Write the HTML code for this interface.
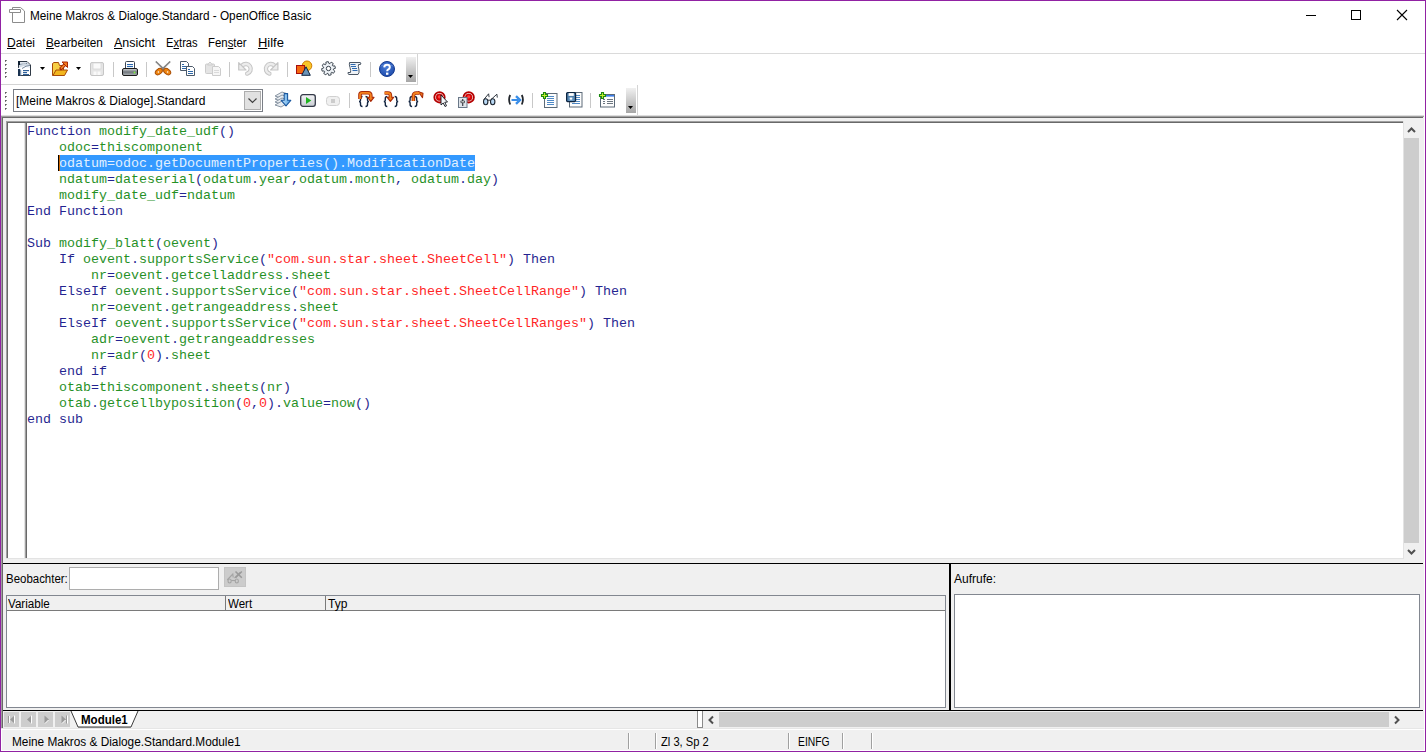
<!DOCTYPE html>
<html><head><meta charset="utf-8">
<style>
*{margin:0;padding:0;box-sizing:border-box}
html,body{width:1426px;height:752px;overflow:hidden;background:#fff}
body{position:relative;font-family:"Liberation Sans",sans-serif;font-size:12px;color:#000}
.a{position:absolute}
.t{position:absolute;white-space:pre;line-height:14px;transform-origin:0 0}
.u{text-decoration:underline}
.code{position:absolute;left:27px;top:124px;font-family:"Liberation Mono",monospace;font-size:13.333px;line-height:16px;white-space:pre;color:#008000;opacity:0.86}
.k{color:#000080}.s{color:#ff0000}.w{color:#fff}
svg{position:absolute;overflow:visible}
.dot{position:absolute;width:1px;height:1px;background:#5a5a5a;box-shadow:1px 0 #8a8a8a,0 1px #8a8a8a}
.dot::before{display:none}
.sep{position:absolute;width:1px;background:#c8c8c8}
</style></head><body>
<!-- ===== TITLE BAR ===== -->
<svg style="left:9px;top:6px" width="17" height="17" viewBox="0 0 17 17">
  <path d="M3.5 1.5 H11.5 L15.5 5 V16.5 H3.5 Z" fill="#fff" stroke="#8c8c8c" stroke-width="1"/>
  <path d="M0.5 3.5 H11.5 V6.5 H0.5 Z" fill="#fff" stroke="#8c8c8c" stroke-width="1"/>
</svg>
<div class="t" id="title" style="left:30px;top:9px;transform:scaleX(0.982)">Meine Makros &amp; Dialoge.Standard - OpenOffice Basic</div>
<div class="a" style="left:1306px;top:15px;width:10px;height:1px;background:#000"></div>
<div class="a" style="left:1351px;top:10px;width:10px;height:10px;border:1px solid #000"></div>
<svg style="left:1397px;top:10px" width="10" height="10" viewBox="0 0 10 10"><path d="M0 0 L10 10 M10 0 L0 10" stroke="#000" stroke-width="1.1"/></svg>

<!-- ===== MENU ===== -->
<div class="t" style="left:7px;top:36px"><span class="u">D</span>atei</div>
<div class="t" style="left:46px;top:36px;transform:scaleX(0.98)"><span class="u">B</span>earbeiten</div>
<div class="t" style="left:114px;top:36px;transform:scaleX(1.04)"><span class="u">A</span>nsicht</div>
<div class="t" style="left:166px;top:36px;transform:scaleX(0.93)">E<span class="u">x</span>tras</div>
<div class="t" style="left:208px;top:36px;transform:scaleX(0.95)">Fen<span class="u">s</span>ter</div>
<div class="t" style="left:258px;top:36px;transform:scaleX(1.08)"><span class="u">H</span>ilfe</div>
<div class="a" style="left:1px;top:53px;width:1424px;height:1px;background:#dadada"></div>

<!-- ===== TOOLBAR 1 ===== -->
<div class="a" style="left:1px;top:84px;width:417px;height:1px;background:#d4d4d4"></div>
<div class="a" style="left:417px;top:54px;width:1px;height:31px;background:#d4d4d4"></div>
<div class="dot" style="left:5px;top:60px"></div><div class="dot" style="left:5px;top:64px"></div><div class="dot" style="left:5px;top:68px"></div><div class="dot" style="left:5px;top:72px"></div><div class="dot" style="left:5px;top:76px"></div>

<!-- new -->
<svg style="left:16px;top:60px" width="16" height="17" viewBox="0 0 16 17">
  <path d="M2.5 1.5 H11 L14.5 5 V15.5 H2.5 Z" fill="#fff" stroke="#303a46"/>
  <path d="M3 2 H10.8 L14 5.2 V8 Q9 6 3 9 Z" fill="#cfd8e2"/>
  <path d="M0.5 9.5 Q7 6.5 14 6.5" fill="none" stroke="#fafcff" stroke-width="1.8"/>
  <path d="M3 4.5 Q8 2.8 11 3.5 M6 8.5 Q10 5.5 14 5.5" fill="none" stroke="#6a7c90" stroke-width="0.9"/>
  <path d="M3 3 H10" stroke="#f4f7fa" stroke-width="1"/>
  <rect x="2" y="1" width="2" height="4" fill="#0e1e30"/>
  <rect x="2" y="9" width="2.2" height="7" fill="#1a3250"/>
  <rect x="4.2" y="10" width="1" height="5.5" fill="#6a8aae"/>
  <rect x="7" y="10" width="6" height="1.2" fill="#2e5f98"/>
  <rect x="7" y="12" width="4" height="1.2" fill="#2e5f98"/>
  <rect x="7" y="14" width="6" height="1.2" fill="#2e5f98"/>
</svg>
<svg style="left:40px;top:67px" width="5" height="3" viewBox="0 0 5 3"><path d="M0 0 H5 L2.5 3 Z" fill="#000"/></svg>
<!-- open -->
<svg style="left:52px;top:61px" width="16" height="15" viewBox="0 0 16 15">
  <path d="M0.5 2.5 V14.5 H11.5 V4.5 H7.5 L6.5 1.5 H2 Z" fill="#f7cf45" stroke="#a84a08"/>
  <path d="M4 9 H15.5 L12.5 14.5 H1 Z" fill="#f2b61e" stroke="#a84a08"/>
  <path d="M9 7.5 L13 3.5" stroke="#a82808" stroke-width="3.2" stroke-linecap="round"/>
  <path d="M9 7.5 L13 3.5" stroke="#f58a2a" stroke-width="1.6"/>
  <path d="M10 1 H15.5 V6.5 Z" fill="#f47a1a" stroke="#a82808" stroke-linejoin="round"/>
</svg>
<svg style="left:76px;top:67px" width="5" height="3" viewBox="0 0 5 3"><path d="M0 0 H5 L2.5 3 Z" fill="#000"/></svg>
<!-- save disabled -->
<svg style="left:90px;top:62px" width="14" height="14" viewBox="0 0 14 14">
  <rect x="0.5" y="0.5" width="13" height="13" rx="1.5" fill="#e6e6e6" stroke="#c6c6c6"/>
  <rect x="3" y="1" width="8" height="6" fill="#fafafa" stroke="#d6d6d6" stroke-width="0.8"/>
  <rect x="3.5" y="9.5" width="3" height="3.5" fill="#fafafa"/>
  <rect x="7.5" y="9.5" width="3" height="3.5" fill="#fafafa"/>
</svg>
<div class="sep" style="left:113px;top:62px;height:15px"></div>
<!-- print -->
<svg style="left:122px;top:61px" width="16" height="15" viewBox="0 0 16 15">
  <defs><linearGradient id="gp" x1="0" y1="0" x2="0" y2="1"><stop offset="0" stop-color="#d8dadc"/><stop offset="0.5" stop-color="#70767c"/><stop offset="1" stop-color="#b0b4b8"/></linearGradient></defs>
  <rect x="3.5" y="0.5" width="9" height="8.5" rx="1" fill="#fff" stroke="#3c4654"/>
  <rect x="5" y="3" width="6" height="1.1" fill="#2a68b0"/>
  <rect x="5" y="5" width="6" height="1.1" fill="#2a68b0"/>
  <rect x="0.5" y="7.5" width="15" height="7" rx="1.5" fill="url(#gp)" stroke="#1a1a1a"/>
  <circle cx="12.5" cy="11.5" r="1" fill="#7cf040"/>
</svg>
<div class="sep" style="left:146px;top:62px;height:15px"></div>
<!-- cut -->
<svg style="left:155px;top:61px" width="16" height="15" viewBox="0 0 16 15">
  <path d="M0.8 0.5 L9.2 8.6 M15.2 0.5 L6.8 8.6" stroke="#707070" stroke-width="1.6"/>
  <path d="M0.8 0.5 L9.2 8.6 M15.2 0.5 L6.8 8.6" stroke="#e8e8e8" stroke-width="0.6" stroke-dasharray="0.8 0.8"/>
  <ellipse cx="3.8" cy="10.6" rx="3.9" ry="2.6" transform="rotate(-38 3.8 10.6)" fill="#ee8410" stroke="#a84c00" stroke-width="1"/>
  <ellipse cx="12.2" cy="10.6" rx="3.9" ry="2.6" transform="rotate(38 12.2 10.6)" fill="#ee8410" stroke="#a84c00" stroke-width="1"/>
  <circle cx="3.4" cy="11" r="0.8" fill="#fff"/><circle cx="12.6" cy="11" r="0.8" fill="#fff"/>
</svg>
<!-- copy -->
<svg style="left:180px;top:61px" width="16" height="16" viewBox="0 0 16 16">
  <path d="M0.5 0.5 H6.5 L8.5 2.5 V9.5 H0.5 Z" fill="#fff" stroke="#4c5a6a"/>
  <rect x="2" y="3" width="2" height="1" fill="#2e68a8"/><rect x="2" y="5" width="5" height="1" fill="#2e68a8"/><rect x="2" y="7" width="5" height="1" fill="#2e68a8"/>
  <path d="M6.5 5.5 H12.5 L14.5 7.5 V14.5 H6.5 Z" fill="#fff" stroke="#4c5a6a"/>
  <rect x="8" y="8" width="2" height="1" fill="#2e68a8"/><rect x="8" y="10" width="5" height="1" fill="#2e68a8"/><rect x="8" y="12" width="5" height="1" fill="#2e68a8"/>
</svg>
<!-- paste disabled -->
<svg style="left:205px;top:61px" width="16" height="15" viewBox="0 0 16 15">
  <rect x="0.5" y="3" width="9" height="9.5" rx="1" fill="#e4e4e4" stroke="#cccccc"/>
  <path d="M2.5 4 L5 1 L7.5 4 Z" fill="#ececec" stroke="#cccccc"/>
  <path d="M7.5 5.5 H13.5 L15.5 7.5 V14.5 H7.5 Z" fill="#f6f6f6" stroke="#cccccc"/>
  <rect x="9" y="9" width="5" height="0.8" fill="#d4d4d4"/><rect x="9" y="11" width="5" height="0.8" fill="#d4d4d4"/>
</svg>
<div class="sep" style="left:229px;top:62px;height:15px"></div>
<!-- undo disabled -->
<svg style="left:238px;top:62px" width="16" height="14" viewBox="0 0 16 14">
  <g id="undo">
  <path d="M4.2 3.6 A4.9 4.9 0 1 1 9.2 11.6" fill="none" stroke="#c6c6c6" stroke-width="4.4" stroke-linecap="round"/>
  <path d="M4.2 3.6 A4.9 4.9 0 1 1 9.2 11.6" fill="none" stroke="#ececec" stroke-width="2.4" stroke-linecap="round"/>
  <path d="M0.7 0.7 V8 H8 Z" fill="#ececec" stroke="#c6c6c6" stroke-width="1.2" stroke-linejoin="round"/>
  </g>
</svg>
<!-- redo disabled -->
<svg style="left:263px;top:62px" width="16" height="14" viewBox="0 0 16 14">
  <g transform="translate(15.6 0) scale(-1 1)">
  <path d="M4.2 3.6 A4.9 4.9 0 1 1 9.2 11.6" fill="none" stroke="#c6c6c6" stroke-width="4.4" stroke-linecap="round"/>
  <path d="M4.2 3.6 A4.9 4.9 0 1 1 9.2 11.6" fill="none" stroke="#ececec" stroke-width="2.4" stroke-linecap="round"/>
  <path d="M0.7 0.7 V8 H8 Z" fill="#ececec" stroke="#c6c6c6" stroke-width="1.2" stroke-linejoin="round"/>
  </g>
</svg>
<div class="sep" style="left:287px;top:62px;height:15px"></div>
<!-- shapes -->
<svg style="left:296px;top:60px" width="16" height="16" viewBox="0 0 16 16">
  <circle cx="11" cy="5.8" r="4.8" fill="#f8c628" stroke="#d07c00"/>
  <rect x="0.5" y="5.5" width="8" height="8" fill="#f46a10" stroke="#a80e0e"/>
  <path d="M10 6.8 L14.3 15.3 H5.7 Z" fill="#6a94b8" stroke="#0e2440" stroke-linejoin="round"/>
</svg>
<!-- gear -->
<svg style="left:321px;top:61px" width="15" height="15" viewBox="0 0 15 15">
  <path d="M5.06 3.13 L4.87 1.12 L7.30 0.60 L7.95 2.52 L8.86 2.69 L10.15 1.13 L12.24 2.48 L11.34 4.30 L11.87 5.06 L13.88 4.87 L14.40 7.30 L12.48 7.95 L12.31 8.86 L13.87 10.15 L12.52 12.24 L10.70 11.34 L9.94 11.87 L10.13 13.88 L7.70 14.40 L7.05 12.48 L6.14 12.31 L4.85 13.87 L2.76 12.52 L3.66 10.70 L3.13 9.94 L1.12 10.13 L0.60 7.70 L2.52 7.05 L2.69 6.14 L1.13 4.85 L2.48 2.76 L4.30 3.66 Z" fill="#eef2f6" stroke="#38414c" stroke-width="0.95" stroke-linejoin="miter"/>
  <circle cx="7.5" cy="7.5" r="2.2" fill="#fff" stroke="#38414c" stroke-width="1"/>
</svg>
<!-- scroll -->
<svg style="left:347px;top:62px" width="15" height="14" viewBox="0 0 15 14">
  <path d="M2.5 0.5 H13 Q14.5 0.5 13.5 2.5 H11.5 Q11 4 12 8 Q12.5 11 11 12.5 H2 Q0.5 12 1 10.5 H3.5 Q4 9 3 5.5 Q2 2.5 2.5 0.5 Z" fill="#eef2f6" stroke="#4a5664" stroke-linejoin="round"/>
  <rect x="3.5" y="2" width="5" height="1" fill="#2e6ab0"/><rect x="4" y="4" width="5" height="1" fill="#2e6ab0"/><rect x="5" y="6" width="5" height="1" fill="#2e6ab0"/><rect x="5.5" y="8" width="5" height="1" fill="#2e6ab0"/>
</svg>
<div class="sep" style="left:370px;top:62px;height:15px"></div>
<!-- help -->
<svg style="left:379px;top:61px" width="16" height="16" viewBox="0 0 16 16">
  <defs><radialGradient id="gh" cx="0.45" cy="0.35" r="0.7"><stop offset="0" stop-color="#4a7ed8"/><stop offset="1" stop-color="#1c48a8"/></radialGradient></defs>
  <circle cx="8" cy="8" r="7.5" fill="url(#gh)" stroke="#143a90" stroke-width="1"/>
  <path d="M1.5 5 Q8 2 14.5 5" fill="none" stroke="#6a94e0" stroke-width="0.8" opacity="0.7"/>
  <path d="M5.2 6.4 Q5.5 3.8 8 3.8 Q10.8 3.8 10.8 6.2 Q10.8 7.8 9 8.6 Q8.2 9.1 8.2 10.2" fill="none" stroke="#fff" stroke-width="2"/>
  <rect x="7" y="11.6" width="2.4" height="2.2" fill="#fff"/>
</svg>
<!-- overflow 1 -->
<div class="a" style="left:406px;top:57px;width:10px;height:25px;background:linear-gradient(#f0f0f0,#a6a6a6)"></div>
<svg style="left:408px;top:75px" width="5" height="3" viewBox="0 0 5 3"><path d="M0 0 H5 L2.5 3 Z" fill="#000"/></svg>

<!-- ===== TOOLBAR 2 ===== -->
<div class="a" style="left:637px;top:85px;width:1px;height:30px;background:#d4d4d4"></div>
<div class="dot" style="left:5px;top:92px"></div><div class="dot" style="left:5px;top:96px"></div><div class="dot" style="left:5px;top:100px"></div><div class="dot" style="left:5px;top:104px"></div><div class="dot" style="left:5px;top:108px"></div>
<div class="a" style="left:13px;top:89px;width:250px;height:23px;border:1px solid #7a7e86;background:#fff"></div>
<div class="t" style="left:16px;top:94px">[Meine Makros &amp; Dialoge].Standard</div>
<div class="a" style="left:244px;top:91px;width:17px;height:19px;border:1px solid #adadad;background:#e1e1e1"></div>
<svg style="left:248px;top:98px" width="9" height="5" viewBox="0 0 9 5"><path d="M0.5 0.5 L4.5 4.5 L8.5 0.5" fill="none" stroke="#404040" stroke-width="1.2"/></svg>

<!-- compile -->
<svg style="left:274px;top:91px" width="18" height="17" viewBox="0 0 18 17">
  <path d="M1 5 L8 1 L14 3 L7 7 Z" fill="#e8ecf0" stroke="#8a96a4"/>
  <path d="M1 8 L8 4 L14 6 L7 10 Z" fill="#e8ecf0" stroke="#8a96a4"/>
  <path d="M1 11 L8 7 L14 9 L7 13 Z" fill="#e8ecf0" stroke="#8a96a4"/>
  <path d="M1 14 L8 10 L14 12 L7 16 Z" fill="#e8ecf0" stroke="#8a96a4"/>
  <defs><linearGradient id="ga" x1="0" y1="0" x2="1" y2="0"><stop offset="0" stop-color="#c8e8fc"/><stop offset="1" stop-color="#4a9ae0"/></linearGradient></defs>
  <path d="M10.2 2.6 H13.6 V9.3 H16.8 L12 14.8 L7.2 9.3 H10.2 Z" fill="url(#ga)" stroke="#1a58a0" stroke-width="1.1" stroke-linejoin="round"/>
</svg>
<!-- run -->
<svg style="left:300px;top:94px" width="16" height="13" viewBox="0 0 16 13">
  <defs><linearGradient id="gr" x1="0" y1="0" x2="0" y2="1"><stop offset="0" stop-color="#f4f4f6"/><stop offset="1" stop-color="#c8ccd2"/></linearGradient></defs>
  <rect x="0.7" y="0.7" width="14.6" height="11.6" rx="2.2" fill="url(#gr)" stroke="#343a48" stroke-width="1.3"/>
  <path d="M6 3 L11.3 6.5 L6 10 Z" fill="#1eb41e"/>
</svg>
<!-- stop disabled -->
<svg style="left:326px;top:96px" width="14" height="10" viewBox="0 0 14 10">
  <rect x="0.5" y="0.5" width="13" height="9" rx="3" fill="#f0f0f0" stroke="#d0d0d0"/>
  <rect x="5" y="3" width="4" height="4" fill="#cccccc"/>
</svg>
<div class="sep" style="left:349px;top:93px;height:15px"></div>
<!-- step over -->
<svg style="left:358px;top:91px" width="17" height="17" viewBox="0 0 17 17">
  <path d="M4.5 5.5 Q2.5 5.5 2.5 7.5 V9.3 Q2.5 10.5 1 10.5 Q2.5 10.5 2.5 11.7 V13.5 Q2.5 15.5 4.5 15.5 M7.5 5.5 Q9.5 5.5 9.5 7.5 V9.3 Q9.5 10.5 11 10.5 Q9.5 10.5 9.5 11.7 V13.5 Q9.5 15.5 7.5 15.5" fill="none" stroke="#122440" stroke-width="1.4"/>
  <path d="M2 8 V3.8 Q2 1.8 4 1.8 H10.2 Q12.8 1.8 12.8 4.5 V7.5" fill="none" stroke="#a82a08" stroke-width="3.6" stroke-linejoin="round"/>
  <path d="M9.6 6.3 H16 L12.8 10.4 Z" fill="#f07a1a" stroke="#a82a08" stroke-width="1.1" stroke-linejoin="round"/>
  <path d="M2 8 V3.8 Q2 1.8 4 1.8 H10.2 Q12.8 1.8 12.8 4.5 V7.5" fill="none" stroke="#f5821e" stroke-width="1.8" stroke-linejoin="round"/>
</svg>
<!-- step into -->
<svg style="left:383px;top:91px" width="16" height="17" viewBox="0 0 16 17">
  <path d="M4.3 5.5 Q2.3 5.5 2.3 7.5 V9.3 Q2.3 10.5 0.8 10.5 Q2.3 10.5 2.3 11.7 V13.5 Q2.3 15.5 4.3 15.5 M11.7 5.5 Q13.7 5.5 13.7 7.5 V9.3 Q13.7 10.5 15.2 10.5 Q13.7 10.5 13.7 11.7 V13.5 Q13.7 15.5 11.7 15.5" fill="none" stroke="#122440" stroke-width="1.4"/>
  <path d="M1.6 2 H5 Q7.4 2 7.4 4.6 V7.5" fill="none" stroke="#a82a08" stroke-width="3.6" stroke-linejoin="round"/>
  <path d="M4.2 6.3 H10.6 L7.4 10.4 Z" fill="#f07a1a" stroke="#a82a08" stroke-width="1.1" stroke-linejoin="round"/>
  <path d="M1.6 2 H5 Q7.4 2 7.4 4.6 V7.5" fill="none" stroke="#f5821e" stroke-width="1.8" stroke-linejoin="round"/>
</svg>
<!-- step out -->
<svg style="left:408px;top:91px" width="16" height="17" viewBox="0 0 16 17">
  <path d="M4.1 5.5 Q2.1 5.5 2.1 7.5 V9.3 Q2.1 10.5 0.6 10.5 Q2.1 10.5 2.1 11.7 V13.5 Q2.1 15.5 4.1 15.5 M6.699999999999999 5.5 Q8.7 5.5 8.7 7.5 V9.3 Q8.7 10.5 10.2 10.5 Q8.7 10.5 8.7 11.7 V13.5 Q8.7 15.5 6.699999999999999 15.5" fill="none" stroke="#122440" stroke-width="1.4"/>
  <path d="M5.4 10 V5 Q5.4 2 8.4 2 H11.5" fill="none" stroke="#a82a08" stroke-width="3.6" stroke-linejoin="round"/>
  <path d="M10.5 0.8 L15 2.2 L14.5 6.8 Z" fill="#f07a1a" stroke="#a82a08" stroke-width="1.1" stroke-linejoin="round"/>
  <path d="M5.4 10 V5 Q5.4 2 8.4 2 H11.5" fill="none" stroke="#f5821e" stroke-width="1.8" stroke-linejoin="round"/>
</svg>
<!-- breakpoint -->
<svg style="left:433px;top:91px" width="16" height="17" viewBox="0 0 16 17">
  <circle cx="6.5" cy="6.3" r="5.2" fill="#ffe8e8" stroke="#b40000" stroke-width="1.8"/>
  <circle cx="6.5" cy="6.3" r="3.3" fill="#e00000" stroke="#a00000" stroke-width="0.6"/>
  <circle cx="6.5" cy="5.8" r="1.6" fill="#ff4040"/>
  <path d="M8 4 V14 L10.2 12 L12 15.5 L13.5 14.8 L11.8 11.3 L14.5 11 Z" fill="#f4f6f8" stroke="#10141c" stroke-width="0.9" stroke-linejoin="round"/>
</svg>
<!-- manage breakpoints -->
<svg style="left:458px;top:91px" width="17" height="17" viewBox="0 0 17 17">
  <circle cx="10.7" cy="6.3" r="5.2" fill="#ffe8e8" stroke="#b40000" stroke-width="1.8"/>
  <circle cx="10.7" cy="6.3" r="3.3" fill="#e00000" stroke="#a00000" stroke-width="0.6"/>
  <circle cx="10.7" cy="5.8" r="1.6" fill="#ff4040"/>
  <rect x="0.5" y="6.5" width="8.5" height="10" fill="#dfe4ea" stroke="#6a7888"/>
  <path d="M4.75 8 V15 M2.8 10.5 H6.7" stroke="#1a1e24" stroke-width="1"/>
  <rect x="3" y="10" width="3.5" height="1.8" fill="#fff" stroke="#1a1e24" stroke-width="0.6"/>
</svg>
<!-- watch glasses -->
<svg style="left:483px;top:92px" width="17" height="15" viewBox="0 0 17 15">
  <ellipse cx="2.7" cy="9.8" rx="2.2" ry="3" fill="#b8d8f4" stroke="#1e2630" stroke-width="1.1"/>
  <ellipse cx="9.7" cy="9.8" rx="2.2" ry="3" fill="#b8d8f4" stroke="#1e2630" stroke-width="1.1"/>
  <path d="M4.9 8.2 H7.5 M0.8 7.6 L5.6 1.8 L6.1 5.2 M8 7.6 L13.9 2.2 L14.3 5.6" fill="none" stroke="#1e2630" stroke-width="0.9"/>
</svg>
<!-- object catalog -->
<svg style="left:507px;top:94px" width="18" height="12" viewBox="0 0 18 12">
  <path d="M3.2 1 Q1 5.5 3.2 10.5" fill="none" stroke="#22262c" stroke-width="1.8"/>
  <path d="M14.8 1 Q17 5.5 14.8 10.5" fill="none" stroke="#22262c" stroke-width="1.8"/>
  <path d="M4.5 6 H11.5" stroke="#3a8ee8" stroke-width="2"/>
  <path d="M9 2.2 L13 6 L9 9.8" fill="none" stroke="#3a8ee8" stroke-width="2.4" stroke-linejoin="miter"/>
</svg>
<div class="sep" style="left:532px;top:93px;height:15px"></div>
<!-- import -->
<svg style="left:541px;top:92px" width="17" height="16" viewBox="0 0 17 16">
  <rect x="3.5" y="1.5" width="12.5" height="14" fill="#fdfdfd" stroke="#5c6a78"/>
  <rect x="6" y="4" width="7" height="0.9" fill="#3a7cc0"/><rect x="6" y="6" width="7" height="0.9" fill="#3a7cc0"/><rect x="6" y="8" width="7" height="0.9" fill="#3a7cc0"/><rect x="6" y="10" width="7" height="0.9" fill="#3a7cc0"/><rect x="6" y="12" width="7" height="0.9" fill="#3a7cc0"/>
  <path d="M2.5 0.5 H4.5 V2.5 H6.5 V4.5 H4.5 V6.5 H2.5 V4.5 H0.5 V2.5 H2.5 Z" fill="#c8f030" stroke="#1e8a10" stroke-width="1.1"/>
</svg>
<!-- export -->
<svg style="left:566px;top:92px" width="17" height="16" viewBox="0 0 17 16">
  <rect x="3.5" y="0.5" width="12.5" height="14.5" fill="#fdfdfd" stroke="#5c6a78"/>
  <rect x="10" y="3" width="4" height="0.9" fill="#3a7cc0"/><rect x="10" y="5" width="4" height="0.9" fill="#3a7cc0"/><rect x="10" y="7" width="4" height="0.9" fill="#3a7cc0"/><rect x="10" y="9" width="4" height="0.9" fill="#3a7cc0"/><rect x="6" y="11" width="8" height="0.9" fill="#3a7cc0"/>
  <rect x="0.6" y="0.6" width="9" height="9" rx="1" fill="#4e7ca6" stroke="#0c2440" stroke-width="1.2"/>
  <rect x="2.6" y="1.1" width="5.2" height="2.8" fill="#fff"/>
  <rect x="2.6" y="5" width="5" height="4" fill="#6a9ac4"/>
  <circle cx="5" cy="6.6" r="1.2" fill="#fff"/>
</svg>
<div class="sep" style="left:590px;top:93px;height:15px"></div>
<!-- insert module -->
<svg style="left:599px;top:92px" width="17" height="16" viewBox="0 0 17 16">
  <rect x="1.5" y="2.5" width="14" height="12.5" fill="#fdfdfd" stroke="#5c6a78"/>
  <rect x="2" y="3" width="13" height="1.6" fill="#3a7ce8"/>
  <rect x="4" y="7" width="2" height="1" fill="#6c7680"/><rect x="8" y="7" width="6" height="1" fill="#6c7680"/>
  <rect x="4" y="9" width="2" height="1" fill="#6c7680"/><rect x="8" y="9" width="6" height="1" fill="#6c7680"/>
  <rect x="4" y="11" width="2" height="1" fill="#6c7680"/><rect x="8" y="11" width="6" height="1" fill="#6c7680"/>
  <path d="M2.5 0.5 H4.5 V2.5 H6.5 V4.5 H4.5 V6.5 H2.5 V4.5 H0.5 V2.5 H2.5 Z" fill="#c8f030" stroke="#1e8a10" stroke-width="1.1"/>
</svg>
<!-- overflow 2 -->
<div class="a" style="left:626px;top:88px;width:10px;height:25px;background:linear-gradient(#f0f0f0,#a6a6a6)"></div>
<svg style="left:628px;top:106px" width="5" height="3" viewBox="0 0 5 3"><path d="M0 0 H5 L2.5 3 Z" fill="#000"/></svg>

<!-- ===== MAIN GRAY AREA ===== -->
<div class="a" style="left:1px;top:116px;width:1423px;height:635px;background:#f0f0f0"></div>
<div class="a" style="left:1px;top:115px;width:1423px;height:1px;background:#dcdcdc"></div>
<div class="a" style="left:1px;top:116px;width:1423px;height:1px;background:#a0a0a0"></div>
<div class="a" style="left:2px;top:117px;width:1421px;height:1px;background:#696969"></div>
<div class="a" style="left:1px;top:116px;width:1px;height:613px;background:#a0a0a0"></div>
<div class="a" style="left:2px;top:117px;width:1px;height:611px;background:#696969"></div>

<!-- editor -->
<div class="a" style="left:6px;top:121px;width:1398px;height:438px;background:#fff;border-right:1px solid #e3e3e3;border-bottom:1px solid #e3e3e3"></div>
<div class="a" style="left:6px;top:121px;width:1397px;height:1px;background:#a0a0a0"></div>
<div class="a" style="left:7px;top:122px;width:1396px;height:1px;background:#696969"></div>
<div class="a" style="left:6px;top:121px;width:1px;height:437px;background:#a0a0a0"></div>
<div class="a" style="left:7px;top:122px;width:1px;height:436px;background:#696969"></div>
<div class="a" style="left:24px;top:123px;width:1px;height:435px;background:#e3e3e3"></div>
<div class="a" style="left:25px;top:123px;width:1px;height:435px;background:#a0a0a0"></div>
<div class="a" style="left:26px;top:123px;width:1px;height:435px;background:#696969"></div>
<div class="a" style="left:59px;top:155px;width:416px;height:16px;background:#3399ff"></div>
<div class="code"><span class="k">Function </span>modify_date_udf<span class="k">()</span>
    odoc<span class="k">=</span>thiscomponent
    <span class="w">odatum=odoc.getDocumentProperties().ModificationDate</span>
    ndatum<span class="k">=</span>dateserial<span class="k">(</span>odatum<span class="k">.</span>year<span class="k">,</span>odatum<span class="k">.</span>month<span class="k">, </span>odatum<span class="k">.</span>day<span class="k">)</span>
    modify_date_udf<span class="k">=</span>ndatum
<span class="k">End Function</span>

<span class="k">Sub </span>modify_blatt<span class="k">(</span>oevent<span class="k">)</span>
    <span class="k">If </span>oevent<span class="k">.</span>supportsService<span class="k">(</span><span class="s">&quot;com.sun.star.sheet.SheetCell&quot;</span><span class="k">) Then</span>
        nr<span class="k">=</span>oevent<span class="k">.</span>getcelladdress<span class="k">.</span>sheet
    <span class="k">ElseIf </span>oevent<span class="k">.</span>supportsService<span class="k">(</span><span class="s">&quot;com.sun.star.sheet.SheetCellRange&quot;</span><span class="k">) Then</span>
        nr<span class="k">=</span>oevent<span class="k">.</span>getrangeaddress<span class="k">.</span>sheet
    <span class="k">ElseIf </span>oevent<span class="k">.</span>supportsService<span class="k">(</span><span class="s">&quot;com.sun.star.sheet.SheetCellRanges&quot;</span><span class="k">) Then</span>
        adr<span class="k">=</span>oevent<span class="k">.</span>getrangeaddresses
        nr<span class="k">=</span>adr<span class="k">(</span><span class="s">0</span><span class="k">).</span>sheet
    <span class="k">end if</span>
    otab<span class="k">=</span>thiscomponent<span class="k">.</span>sheets<span class="k">(</span>nr<span class="k">)</span>
    otab<span class="k">.</span>getcellbyposition<span class="k">(</span><span class="s">0</span><span class="k">,</span><span class="s">0</span><span class="k">).</span>value<span class="k">=</span>now<span class="k">()</span>
<span class="k">end sub</span></div>
<div class="a" style="left:58px;top:155px;width:1px;height:16px;background:#000"></div>
<div class="a" style="left:59px;top:155px;width:1px;height:16px;background:#cc6600"></div>

<!-- vertical scrollbar -->
<svg style="left:1407px;top:127px" width="9" height="6" viewBox="0 0 9 6"><path d="M1 5 L4.5 1.5 L8 5" fill="none" stroke="#505050" stroke-width="2"/></svg>
<div class="a" style="left:1404px;top:138px;width:15px;height:405px;background:#cdcdcd"></div>
<svg style="left:1407px;top:549px" width="9" height="6" viewBox="0 0 9 6"><path d="M1 1 L4.5 4.5 L8 1" fill="none" stroke="#505050" stroke-width="2"/></svg>

<!-- splitter -->
<div class="a" style="left:3px;top:563px;width:1420px;height:1px;background:#000"></div>
<div class="a" style="left:949px;top:563px;width:2px;height:147px;background:#000"></div>

<!-- watch -->
<div class="t" style="left:6px;top:572px;transform:scaleX(0.955)">Beobachter:</div>
<div class="a" style="left:69px;top:567px;width:150px;height:23px;border:1px solid #adadad;background:#fff"></div>
<div class="a" style="left:224px;top:567px;width:22px;height:20px;background:#cccccc;border:1px solid #c4c4c4"></div>
<svg style="left:226px;top:569px" width="18" height="16" viewBox="0 0 18 16">
  <g fill="none" stroke="#a4a4a4" stroke-width="1.1">
  <ellipse cx="3.6" cy="12" rx="1.6" ry="2"/><ellipse cx="10.8" cy="12" rx="1.6" ry="2"/><path d="M5.2 11.5 H9.2"/>
  <path d="M1.2 11 L6.8 5 L7.2 8.5 M8.5 9 L14 3.5"/>
  </g>
  <path d="M9.5 2.5 L15.8 8.8 M15.8 2.5 L9.5 8.8" stroke="#9a9a9a" stroke-width="1.6"/>
</svg>
<div class="a" style="left:6px;top:595px;width:940px;height:113px;border:1px solid #828790;background:#fff"></div>
<div class="a" style="left:7px;top:596px;width:938px;height:15px;background:#f0f0f0;border-bottom:1px solid #7a7a7a"></div>
<div class="a" style="left:225px;top:596px;width:1px;height:14px;background:#7a7a7a"></div>
<div class="a" style="left:325px;top:596px;width:1px;height:14px;background:#7a7a7a"></div>
<div class="t" style="left:8px;top:597px;transform:scaleX(0.97)">Variable</div>
<div class="t" style="left:228px;top:597px;transform:scaleX(0.96)">Wert</div>
<div class="t" style="left:328px;top:597px">Typ</div>

<!-- calls -->
<div class="t" style="left:954px;top:572px">Aufrufe:</div>
<div class="a" style="left:954px;top:594px;width:466px;height:114px;border:1px solid #828790;background:#fff"></div>

<!-- tab bar -->
<div class="a" style="left:3px;top:710px;width:1420px;height:1px;background:#000"></div>
<div class="a" style="left:4px;top:712px;width:15px;height:15px;background:#cdcdcd"></div>
<div class="a" style="left:21px;top:712px;width:15px;height:15px;background:#cdcdcd"></div>
<div class="a" style="left:38px;top:712px;width:15px;height:15px;background:#cdcdcd"></div>
<div class="a" style="left:55px;top:712px;width:15px;height:15px;background:#cdcdcd"></div>
<svg style="left:4px;top:712px" width="66" height="15" viewBox="0 0 66 15">
  <rect x="4" y="4" width="1" height="7" fill="#9a9a9a"/><path d="M10.5 3.5 L6 7.5 L10.5 11.5 Z" fill="#9a9a9a"/><rect x="10" y="3.5" width="1" height="8" fill="#fff"/><rect x="5" y="4" width="1" height="7" fill="#fff"/>
  <path d="M27.5 3.5 L23 7.5 L27.5 11.5 Z" fill="#9a9a9a"/><rect x="27" y="3.5" width="1" height="8" fill="#fff"/>
  <path d="M40.5 3.5 L45 7.5 L40.5 11.5 Z" fill="#9a9a9a"/><path d="M41 11.5 L44.5 8" stroke="#fff" stroke-width="1"/>
  <path d="M57.5 3.5 L62 7.5 L57.5 11.5 Z" fill="#9a9a9a"/><path d="M58 11.5 L61.5 8" stroke="#fff" stroke-width="1"/><rect x="62" y="3.5" width="1" height="8" fill="#9a9a9a"/><rect x="63" y="3.5" width="1" height="8" fill="#fff"/>
</svg>
<svg style="left:70px;top:710px" width="72" height="19" viewBox="0 0 72 19">
  <path d="M1 1 L8 17 H61 L68 1" fill="#fff" stroke="#3c3c3c" stroke-width="1"/>
  <path d="M8 17.5 H61" stroke="#808080" stroke-width="1"/>
</svg>
<div class="t" style="left:81px;top:713px;font-weight:bold;transform:scaleX(0.96)">Module1</div>
<div class="a" style="left:697px;top:711px;width:6px;height:17px;background:#fff;border-left:1px solid #8a8a8a;border-bottom:1px solid #8a8a8a;border-right:1px solid #8a8a8a"></div>
<svg style="left:708px;top:716px" width="6" height="8" viewBox="0 0 6 8"><path d="M5 0.5 L1.5 4 L5 7.5" fill="none" stroke="#505050" stroke-width="2"/></svg>
<div class="a" style="left:719px;top:712px;width:670px;height:15px;background:#cdcdcd"></div>
<svg style="left:1394px;top:716px" width="6" height="8" viewBox="0 0 6 8"><path d="M1 0.5 L4.5 4 L1 7.5" fill="none" stroke="#505050" stroke-width="2"/></svg>
<div class="a" style="left:1px;top:728px;width:1423px;height:1px;background:#e6e6e6"></div>
<div class="a" style="left:1px;top:729px;width:1424px;height:22px;border:1px solid #fff;background:#f0f0f0"></div>

<!-- status bar -->
<div class="t" style="left:12px;top:735px;transform:scaleX(0.985)">Meine Makros &amp; Dialoge.Standard.Module1</div>
<div class="a" style="left:628px;top:733px;width:2px;height:16px;border-left:1px solid #a0a0a0;background:#fff"></div>
<div class="a" style="left:655px;top:733px;width:2px;height:16px;border-left:1px solid #a0a0a0;background:#fff"></div>
<div class="t" style="left:661px;top:735px;transform:scaleX(0.93)">Zl 3, Sp 2</div>
<div class="a" style="left:788px;top:733px;width:2px;height:16px;border-left:1px solid #a0a0a0;background:#fff"></div>
<div class="t" style="left:798px;top:735px;transform:scaleX(0.86)">EINFG</div>
<div class="a" style="left:842px;top:733px;width:2px;height:16px;border-left:1px solid #a0a0a0;background:#fff"></div>
<div class="a" style="left:871px;top:733px;width:2px;height:16px;border-left:1px solid #a0a0a0;background:#fff"></div>

<!-- window border -->
<div class="a" style="left:0;top:0;width:1426px;height:752px;border:1px solid #9122a3;z-index:50"></div>
</body></html>
